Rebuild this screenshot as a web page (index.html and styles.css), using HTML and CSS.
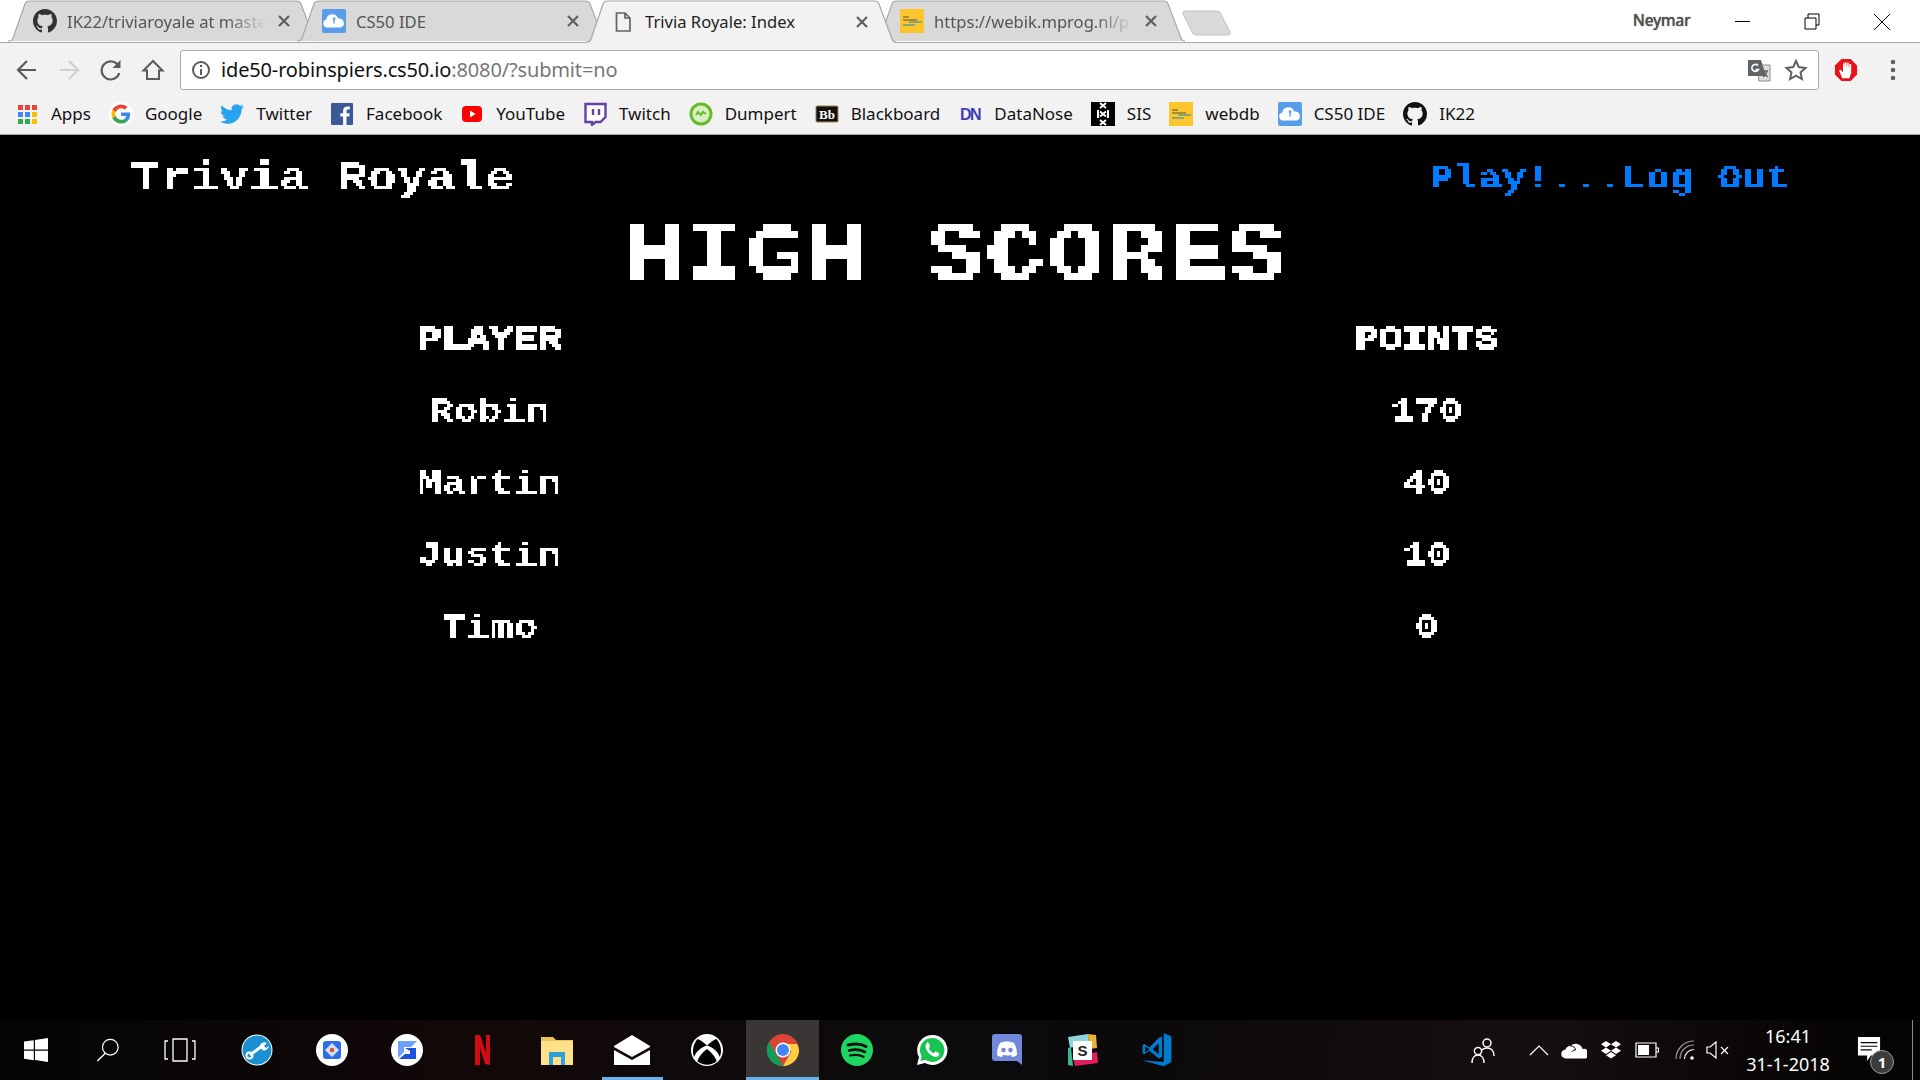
FILE: index.html
```html
<!DOCTYPE html>
<html lang="en">
<head>
<meta charset="utf-8">
<title>Trivia Royale: Index</title>
<link rel="stylesheet" href="styles.css">
</head>
<body>
<svg class="sprite" aria-hidden="true">
  <filter id="px3" x="-5%" y="-5%" width="110%" height="110%" color-interpolation-filters="sRGB"><feFlood x="1" y="1" width="1" height="1"/><feComposite width="3" height="3"/><feTile result="g"/><feComposite in="SourceGraphic" in2="g" operator="in"/><feComponentTransfer><feFuncA type="discrete" tableValues="0 1"/></feComponentTransfer><feMorphology operator="dilate" radius="1"/></filter>
  <filter id="px7" x="-5%" y="-5%" width="110%" height="110%" color-interpolation-filters="sRGB"><feFlood x="3" y="3" width="1" height="1"/><feComposite width="7" height="7"/><feTile result="g"/><feComposite in="SourceGraphic" in2="g" operator="in"/><feComponentTransfer><feFuncA type="discrete" tableValues="0 1"/></feComponentTransfer><feMorphology operator="dilate" radius="3"/></filter>
  <symbol id="gh" viewBox="0 0 16 16"><path fill="currentColor" d="M8 0C3.58 0 0 3.58 0 8c0 3.54 2.29 6.53 5.47 7.59.4.07.55-.17.55-.38 0-.19-.01-.82-.01-1.49-2.01.37-2.53-.49-2.69-.94-.09-.23-.48-.94-.82-1.13-.28-.15-.68-.52-.01-.53.63-.01 1.08.58 1.23.82.72 1.21 1.87.87 2.33.66.07-.52.28-.87.51-1.07-1.78-.2-3.64-.89-3.64-3.95 0-.87.31-1.59.82-2.15-.08-.2-.36-1.02.08-2.12 0 0 .67-.21 2.2.82.64-.18 1.32-.27 2-.27.68 0 1.36.09 2 .27 1.53-1.04 2.2-.82 2.2-.82.44 1.1.16 1.92.08 2.12.51.56.82 1.27.82 2.15 0 3.07-1.87 3.75-3.65 3.95.29.25.54.73.54 1.48 0 1.07-.01 1.93-.01 2.2 0 .21.15.46.55.38A8.013 8.013 0 0016 8c0-4.42-3.58-8-8-8z"/></symbol>
  <symbol id="cs50" viewBox="0 0 24 24"><rect width="24" height="24" rx="2" fill="#579dea"/><path fill="#fff" d="M5 18.500a4 4 0 0 1-.6-7.900 6 6 0 0 1 11.700-1 4.700 4.700 0 0 1 2.900 8.900z"/><path fill="#579dea" d="M10.800 8.500h2.600v1.800l-.6.600v3.600h-1.400v-3.600l-.6-.6z"/></symbol>
  <symbol id="webik" viewBox="0 0 24 24"><rect width="24" height="24" fill="#fdc52c"/><path stroke="#8a7a3a" stroke-width="1.400" d="M3 8h6M3 11h14"/><path stroke="#5f9f8f" stroke-width="1.400" d="M9 13h13M3 16h12"/></symbol>
  <symbol id="doc" viewBox="0 0 24 24"><path fill="none" stroke="#5f6368" stroke-width="1.700" d="M5.500 3h8.500l5 5v13h-13.500zM14 3v5h5"/></symbol>
  <symbol id="x" viewBox="0 0 16 16"><path stroke="#5f5f5f" stroke-width="2.200" d="M3 3l10 10M13 3L3 13"/></symbol>
</svg>

<header class="chrome">
  <div class="titlebar">
    <div class="tabs">
      <div class="tab">
        <svg class="tab-shape" viewBox="0 0 310 43" preserveAspectRatio="none"><path class="shape-off" d="M0 42h1q3 0 4-3L17 4q1-3 5-3h266q4 0 5 3l13 35q1 3 4 3"/></svg>
        <svg class="fav fav-gh"><use href="#gh"/></svg>
        <span class="tab-title tab-fade">IK22/triviaroyale at maste</span>
        <svg class="tab-x"><use href="#x"/></svg>
      </div>
      <div class="tab">
        <svg class="tab-shape" viewBox="0 0 310 43" preserveAspectRatio="none"><path class="shape-off" d="M0 42h1q3 0 4-3L17 4q1-3 5-3h266q4 0 5 3l13 35q1 3 4 3"/></svg>
        <svg class="fav"><use href="#cs50"/></svg>
        <span class="tab-title">CS50 IDE</span>
        <svg class="tab-x"><use href="#x"/></svg>
      </div>
      <div class="tab tab-active">
        <svg class="tab-shape" viewBox="0 0 310 43" preserveAspectRatio="none"><path class="shape-on" d="M0 43V42h1q3 0 4-3L17 4q1-3 5-3h266q4 0 5 3l13 35q1 3 4 3v1"/></svg>
        <svg class="fav"><use href="#doc"/></svg>
        <span class="tab-title tab-title-on">Trivia Royale: Index</span>
        <svg class="tab-x"><use href="#x"/></svg>
      </div>
      <div class="tab">
        <svg class="tab-shape" viewBox="0 0 310 43" preserveAspectRatio="none"><path class="shape-off" d="M0 42h1q3 0 4-3L17 4q1-3 5-3h266q4 0 5 3l13 35q1 3 4 3"/></svg>
        <svg class="fav"><use href="#webik"/></svg>
        <span class="tab-title tab-fade">https://webik.mprog.nl/p</span>
        <svg class="tab-x"><use href="#x"/></svg>
      </div>
      <svg class="newtab" viewBox="0 0 50 26"><path d="M3 1h32q3 0 4 3l9 18q1 3-2 3H14q-3 0-4-3L1 4Q0 1 3 1z"/></svg>
    </div>
    <span class="profile">Neymar</span>
    <div class="winctl">
      <svg class="wbtn" viewBox="0 0 70 42"><path d="M28 21.500h15" stroke="#000" stroke-width="1" fill="none"/></svg>
      <svg class="wbtn" viewBox="0 0 70 42"><path d="M28 18h11v11H28zM31 18v-4h11v11h-3" stroke="#000" stroke-width="1" fill="none"/></svg>
      <svg class="wbtn" viewBox="0 0 70 42"><path d="M27 14l16 16M43 14L27 30" stroke="#000" stroke-width="1" fill="none"/></svg>
    </div>
  </div>

  <div class="toolbar">
    <svg class="nav-btn" viewBox="0 0 42 42"><path d="M30 21H13M21 12l-9 9 9 9" fill="none" stroke="#5a5a5a" stroke-width="2.200"/></svg>
    <svg class="nav-btn" viewBox="0 0 42 42"><path d="M12 21h17M21 12l9 9-9 9" fill="none" stroke="#d0d0d0" stroke-width="2.200"/></svg>
    <svg class="nav-btn" viewBox="0 0 42 42"><path d="M28.500 17a9 9 0 1 0 .8 7" fill="none" stroke="#5a5a5a" stroke-width="2.200"/><path d="M30.500 11v8h-8z" fill="#5a5a5a"/></svg>
    <svg class="nav-btn" viewBox="0 0 42 42"><path d="M21 12l-9.500 9.500H15V30h12v-8.500h3.500z" fill="none" stroke="#5a5a5a" stroke-width="2"/></svg>
    <div class="omnibox">
      <svg class="info" viewBox="0 0 20 20"><circle cx="10" cy="10" r="8" fill="none" stroke="#5a5a5a" stroke-width="2"/><path d="M10 9v6M10 5v2" stroke="#5a5a5a" stroke-width="2"/></svg>
      <span class="url">ide50-robinspiers.cs50.io<span class="url-dim">:8080/?submit=no</span></span>
      <svg class="omni-ic" viewBox="0 0 24 24"><path fill="#ddd" stroke="#8a8a8a" d="M10 7h13v16H12z"/><path fill="#5f6368" d="M1 2h13l5 16H1z"/><path fill="none" stroke="#fff" stroke-width="1.600" d="M11 7.500a3.500 3.500 0 1 0 .5 4H8.500"/><path fill="none" stroke="#5f6368" stroke-width="1.300" d="M14 13h7M17 13c.5 3 2 5 4 6M20 13c-.5 3-2 5-4 6"/></svg>
      <svg class="omni-ic star" viewBox="0 0 24 24"><path fill="none" stroke="#5f6368" stroke-width="2" d="M12 3l2.800 6.100 6.700.8-5 4.500 1.400 6.600-5.900-3.300L6.100 21l1.400-6.600-5-4.500 6.700-.8z"/></svg>
    </div>
    <svg class="adblock" viewBox="0 0 26 26"><path fill="#e6131a" d="M8 1h10l7 7v10l-7 7H8l-7-7V8z"/><path fill="#fff" d="M9 22l-3.500-8.500 1.200-1 3 3V6h1.400v5l.5-6.500h1.800L13.900 11l.5-6H16v6.500l1-5h1.600V16l-2 6z"/></svg>
    <svg class="dots" viewBox="0 0 6 22"><circle cx="3" cy="3" r="2.300" fill="#5f5f5f"/><circle cx="3" cy="11" r="2.300" fill="#5f5f5f"/><circle cx="3" cy="19" r="2.300" fill="#5f5f5f"/></svg>
  </div>

  <div class="bookmarks">
    <a class="bm"><svg class="bm-ic" viewBox="0 0 24 24"><path fill="#ea4335" d="M3 3h5v5H3zM10 3h5v5h-5zM17 3h5v5h-5z"/><path fill="#4285f4" d="M3 10h5v5H3zM10 10h5v5h-5z"/><path fill="#34a853" d="M3 17h5v5H3zM10 17h5v5h-5z"/><path fill="#fbbc05" d="M17 10h5v5h-5zM17 17h5v5h-5z"/></svg>Apps</a>
    <a class="bm"><svg class="bm-ic" viewBox="-6 -6 60 60"><circle cx="24" cy="24" r="30" fill="#fff"/><path fill="#EA4335" d="M24 9.500c3.540 0 6.710 1.220 9.210 3.600l6.850-6.850C35.900 2.380 30.470 0 24 0 14.620 0 6.510 5.380 2.560 13.220l7.980 6.190C12.430 13.720 17.740 9.500 24 9.500z"/><path fill="#4285F4" d="M46.980 24.550c0-1.570-.15-3.090-.38-4.550H24v9.020h12.940c-.58 2.960-2.260 5.480-4.780 7.180l7.730 6c4.510-4.180 7.090-10.360 7.090-17.650z"/><path fill="#FBBC05" d="M10.530 28.590c-.48-1.450-.76-2.990-.76-4.590s.27-3.140.76-4.590l-7.980-6.190C.92 16.460 0 20.120 0 24c0 3.880.92 7.540 2.560 10.780l7.970-6.190z"/><path fill="#34A853" d="M24 48c6.480 0 11.930-2.130 15.890-5.810l-7.730-6c-2.150 1.450-4.920 2.300-8.160 2.300-6.260 0-11.570-4.220-13.470-9.910l-7.980 6.190C6.510 42.620 14.620 48 24 48z"/></svg>Google</a>
    <a class="bm"><svg class="bm-ic" viewBox="0 0 24 24"><path fill="#2aa3ef" d="M23.953 4.570a10 10 0 01-2.825.775 4.958 4.958 0 002.163-2.723c-.951.555-2.005.959-3.127 1.184a4.920 4.920 0 00-8.384 4.482C7.690 8.095 4.067 6.130 1.640 3.162a4.822 4.822 0 00-.666 2.475c0 1.710.870 3.213 2.188 4.096a4.904 4.904 0 01-2.228-.616v.06a4.923 4.923 0 003.946 4.827 4.996 4.996 0 01-2.212.085 4.936 4.936 0 004.604 3.417 9.867 9.867 0 01-6.102 2.105c-.39 0-.779-.023-1.170-.067a13.995 13.995 0 007.557 2.209c9.053 0 13.998-7.496 13.998-13.985 0-.21 0-.42-.015-.63A9.935 9.935 0 0024 4.590z"/></svg>Twitter</a>
    <a class="bm"><svg class="bm-ic" viewBox="0 0 24 24"><rect x="1" y="1" width="22" height="22" rx="1" fill="#3b5998"/><path fill="#fff" d="M16.500 23v-8.500h2.800l.4-3.300h-3.200V9.100c0-1 .3-1.600 1.600-1.600h1.700V4.600c-.3 0-1.300-.1-2.500-.1-2.500 0-4.200 1.500-4.200 4.300v2.400h-2.800v3.300h2.800V23z"/></svg>Facebook</a>
    <a class="bm"><svg class="bm-ic" viewBox="0 0 24 24"><rect x="2" y="4" width="20" height="16" rx="4" fill="#f00"/><path fill="#fff" d="M10 8.500l5.500 3.500-5.500 3.500z"/></svg>YouTube</a>
    <a class="bm"><svg class="bm-ic" viewBox="0 0 24 24"><path fill="#fff" stroke="#6441a4" stroke-width="2.400" d="M2.500 2h20v13l-5 5h-5l-3.500 3v-3H2.500z"/><path stroke="#6441a4" stroke-width="2.400" d="M10 7v6M16 7v6"/></svg>Twitch</a>
    <a class="bm"><svg class="bm-ic" viewBox="0 0 24 24"><circle cx="12" cy="12" r="10" fill="#d9efc6" stroke="#66bb2a" stroke-width="3"/><path stroke="#66bb2a" stroke-width="2" fill="none" d="M7 13l2-3 3 3 2-3 3 2"/></svg>Dumpert</a>
    <a class="bm"><svg class="bm-ic" viewBox="0 0 24 24"><rect x="1" y="4" width="22" height="16" rx="1" fill="#111" stroke="#a8874a"/><text class="bb" x="12" y="16.500" text-anchor="middle">Bb</text></svg>Blackboard</a>
    <a class="bm"><svg class="bm-ic" viewBox="0 0 24 24"><text class="dn" x="12" y="18" text-anchor="middle">DN</text></svg>DataNose</a>
    <a class="bm"><svg class="bm-ic" viewBox="0 0 24 24"><rect width="24" height="29" y="-2" fill="#000"/><path stroke="#fff" stroke-width="2" d="M9 1l6 5M15 1L9 6M9 9.500l6 5M15 9.500l-6 5M9 18l6 5M15 18l-6 5M7 8v8M17 8v8"/></svg>SIS</a>
    <a class="bm"><svg class="bm-ic"><use href="#webik"/></svg>webdb</a>
    <a class="bm"><svg class="bm-ic"><use href="#cs50"/></svg>CS50 IDE</a>
    <a class="bm"><svg class="bm-ic bm-gh"><use href="#gh"/></svg>IK22</a>
  </div>
</header>

<main class="page">
  <div class="site-head">
    <span class="brand"><span class="px px-left">Trivia Royale</span></span>
    <span class="site-nav"><span class="px px-right">Play!...Log Out</span></span>
  </div>
  <h1 class="hs-title"><span class="px">HIGH SCORES</span></h1>
  <div class="scores">
    <div class="cell cell-head"><span class="px">PLAYER</span></div><div class="cell cell-head"><span class="px">POINTS</span></div>
    <div class="cell"><span class="px">Robin</span></div><div class="cell"><span class="px">170</span></div>
    <div class="cell"><span class="px">Martin</span></div><div class="cell"><span class="px">40</span></div>
    <div class="cell"><span class="px">Justin</span></div><div class="cell"><span class="px">10</span></div>
    <div class="cell"><span class="px">Timo</span></div><div class="cell"><span class="px">0</span></div>
  </div>
</main>

<footer class="taskbar">
  <div class="sys">
    <svg class="tb" viewBox="0 0 24 24"><path fill="#fff" d="M0 3.500l9.800-1.300v9.400H0zM11 2l13-2v11.600H11zM0 12.700h9.800v9.500L0 20.800zM11 12.700h13V24l-13-1.900z"/></svg>
    <svg class="tb" viewBox="0 0 26 26"><circle cx="15.500" cy="10" r="8.500" fill="none" stroke="#fff" stroke-width="1.300"/><path d="M10 16.500L1.500 25" stroke="#fff" stroke-width="1.500"/></svg>
    <svg class="tb tb-wide" viewBox="0 0 32 24"><path fill="none" stroke="#fff" stroke-width="1.300" d="M9 1h14v22H9zM4 3H1v18h3M28 3h3v18h-3"/></svg>
  </div>
  <div class="apps">
    <span class="app"><svg viewBox="0 0 32 32"><circle cx="16" cy="16" r="15.500" fill="#fff"/><circle cx="16" cy="16" r="14.500" fill="#1a8fd1"/><path fill="none" stroke="#fff" stroke-width="3" d="M9 21l12-9"/><circle cx="8.500" cy="21.500" r="3" fill="none" stroke="#fff" stroke-width="2"/><path fill="#fff" d="M19 11a5 5 0 0 1 7-2l-3 3 2 2 3-2a5 5 0 0 1-7 4z"/></svg></span>
    <span class="app"><svg viewBox="0 0 32 32"><circle cx="16" cy="16" r="16" fill="#fff"/><rect x="7" y="7" width="18" height="18" rx="3" fill="#2e6de4"/><path fill="#cfe0ff" d="M16 9l7 7-7 7-7-7z"/><circle cx="16" cy="16" r="2.300" fill="#e8501f"/></svg></span>
    <span class="app"><svg viewBox="0 0 32 32"><circle cx="16" cy="16" r="16" fill="#fff"/><path fill="#6ea0ff" d="M7 7h19l-6 6h-7v5l-6 6z"/><path fill="#1b54dc" d="M14 14h11v11H8l6-5h5v-3z"/></svg></span>
    <span class="app"><svg viewBox="0 0 32 32"><path fill="#d00d12" d="M9 1h5l6 18V1h4v30l-5-1-5-16v17l-5 .500z"/></svg></span>
    <span class="app"><svg viewBox="0 0 32 32"><path fill="#e9c24f" d="M0 3h12l3 3h17v25H0z"/><rect y="7" width="32" height="24" rx="1" fill="#ffe18a"/><path fill="#2f9fe0" d="M8 18h16v13h-4v-8h-8v8H8z"/></svg></span>
    <span class="app app-mail"><svg viewBox="0 0 36 32"><path fill="#fff" d="M18 1l18 11v1L18 23 0 13v-1zM0 16l18 10 18-10v15H0z"/></svg></span>
    <span class="app"><svg viewBox="0 0 32 32"><circle cx="16" cy="16" r="16" fill="#fff"/><path fill="#000" d="M16 11.500C13 9 9.500 5.800 6.500 5 1.500 11 1 18 3.200 23c1.500-5 7-10 12.800-11.500zM16 11.500C19 9 22.500 5.800 25.500 5c5 6 5.500 13 3.300 18-1.500-5-7-10-12.800-11.500zM16 15c-4 3-8.500 8-9.700 12.300 5.500 4.500 14 4.500 19.400 0C24.500 23 20 18 16 15z"/></svg></span>
    <span class="app app-active"><svg viewBox="0 0 32 32"><circle cx="16" cy="16" r="16" fill="#db4437"/><path fill="#0f9d58" d="M16 32A16 16 0 0 1 2 8l8.500 14.500L16 32z"/><path fill="#ffcd40" d="M32 16a16 16 0 0 1-16 16l8.500-14.500L16 10h14a16 16 0 0 1 2 6z"/><circle cx="16" cy="16" r="7.500" fill="#fff"/><circle cx="16" cy="16" r="6" fill="#4285f4"/></svg></span>
    <span class="app"><svg viewBox="0 0 32 32"><circle cx="16" cy="16" r="16" fill="#1ed760"/><path fill="none" stroke="#111" stroke-linecap="round" stroke-width="3" d="M7 11c6-1.500 13-1.500 18 1.500"/><path fill="none" stroke="#111" stroke-linecap="round" stroke-width="2.600" d="M8 16.500c5-1.300 11-1 16 1.500"/><path fill="none" stroke="#111" stroke-linecap="round" stroke-width="2.200" d="M9 21.500c4.500-1 9.500-.8 13.500 1.300"/></svg></span>
    <span class="app"><svg viewBox="0 0 32 32"><path fill="#fff" d="M16 1a15 15 0 0 0-13 22.300L1 31l8-2A15 15 0 1 0 16 1z"/><path fill="#19c34f" d="M16 4A12 12 0 0 0 5.700 22.200L4.500 27l5-1.200A12 12 0 1 0 16 4z"/><path fill="#fff" d="M11.500 8.500c-1.500 1-2.500 3-1.700 5.500 1 3.500 4.500 7.500 8.500 8.700 2.500.7 4.500-.5 5-2.200.2-.7 0-1.200-.4-1.400l-3-1.500c-.5-.2-.8 0-1 .3l-1 1.300c-2.500-1-4.200-3-5.200-5l1.100-1.300c.3-.4.300-.7.100-1.100l-1.300-3c-.2-.5-.9-.9-1.600-.8z"/></svg></span>
    <span class="app"><svg viewBox="0 0 32 32"><path fill="#7289da" d="M4 0h24q3 0 3 3v28l-5-4H4q-3 0-3-3V3q0-3 3-3z"/><path fill="#fff" d="M9 9c4-2 10-2 14 0 2 3 3 7 3 12-2 1.500-3.500 2-5 2l-1-2c-2 .6-4 .6-8 0l-1 2c-1.500 0-3-.5-5-2 0-5 1-9 3-12z"/><circle cx="12.500" cy="16" r="2.300" fill="#7289da"/><circle cx="19.500" cy="16" r="2.300" fill="#7289da"/></svg></span>
    <span class="app"><svg viewBox="0 0 32 32"><path fill="#8fd4e0" d="M2 3l20-3 1 9L4 14z"/><path fill="#e9b33a" d="M22 0l8 1 1 13-8 1z"/><path fill="#3eb890" d="M2 14l3-1 2 19-5-1z"/><path fill="#e01e5a" d="M7 23l24-5 1 11-23 3z"/><rect x="7" y="7" width="19" height="19" rx="1" fill="#fff"/><text class="slack" x="16.500" y="22" text-anchor="middle">S</text></svg></span>
    <span class="app"><svg viewBox="0 0 36 40"><path fill="#007acc" d="M26 0l9 4v30l-9 5-26-7 26 2V0z"/><path fill="#007acc" d="M20 6l4-2v24l-4 2-11-9-6 4-2-1V14l2-1 6 4zM9 19l-5-3v7zM20 12l-7 7 7 6z"/></svg></span>
  </div>
  <div class="tray">
    <svg class="tr tr-people" viewBox="0 0 24 28"><circle cx="16" cy="7" r="4" fill="none" stroke="#fff" stroke-width="1.500"/><path d="M9 20c0-5 3-8 7-8s7 3 7 8" fill="none" stroke="#fff" stroke-width="1.500"/><circle cx="7" cy="15" r="3.600" fill="#050303" stroke="#fff" stroke-width="1.500"/><path d="M1 27c0-5 2.500-8 6-8s6 3 6 8" fill="none" stroke="#fff" stroke-width="1.500"/></svg>
    <svg class="tr tr-caret" viewBox="0 0 20 12"><path d="M1 11l9-9 9 9" fill="none" stroke="#fff" stroke-width="1.200"/></svg>
    <svg class="tr tr-cloud" viewBox="0 0 26 18"><path fill="#fff" d="M5 17.500a4.500 4.500 0 0 1-.5-9 5 5 0 0 1 5-3.500 7 7 0 0 1 12 3 5 5 0 0 1 3 9.500z"/><path fill="none" stroke="#0a0606" stroke-width="1" d="M9.500 5a5 5 0 0 1 5 4 4 4 0 0 0-4 2"/></svg>
    <svg class="tr tr-drop" viewBox="0 0 22 20"><path fill="#fff" d="M6 1l5 3.200L6 7.500 1 4.200zM16 1l5 3.200-5 3.300-5-3.300zM6 7.500l5 3.300-5 3.200-5-3.200zM16 7.500l5 3.300-5 3.200-5-3.200zM11 12l5 3.200-5 3.300-5-3.300z"/></svg>
    <svg class="tr tr-batt" viewBox="0 0 24 16"><path fill="none" stroke="#fff" stroke-width="1.200" d="M1 1h20v14H1zM21.500 6h2v4h-2"/><rect x="3" y="3" width="11" height="10" fill="#fff"/></svg>
    <svg class="tr tr-wifi" viewBox="0 0 20 20"><path fill="none" stroke="#999" stroke-width="1.200" d="M1 19C1 9 9 1 19 1M5 19C5 11 11 5 19 5"/><path fill="none" stroke="#fff" stroke-width="1.200" d="M9.500 19c0-5 4-9.500 9.500-9.500"/><circle cx="17" cy="18" r="1.800" fill="#fff"/></svg>
    <svg class="tr tr-vol" viewBox="0 0 24 18"><path fill="none" stroke="#fff" stroke-width="1.200" d="M1 6h3l6-5v16l-6-5H1zM15 6l7 7M22 6l-7 7"/></svg>
    <div class="clock"><span>16:41</span><span>31-1-2018</span></div>
    <div class="notif">
      <svg class="notif-ic" viewBox="0 0 26 28"><path fill="#fff" d="M1 1h24v20H15l-4 6v-6H1z"/><path stroke="#050303" stroke-width="1.300" d="M4 7h18M4 11h18M4 15h12"/></svg>
      <span class="badge">1</span>
    </div>
    <span class="show-desk"></span>
  </div>
</footer>
</body>
</html>
```

FILE: styles.css
```css
* { box-sizing: border-box; }
html, body { height: 100%; }
body {
  margin: 0;
  height: 1080px;
  width: 1920px;
  overflow: hidden;
  display: flex;
  flex-direction: column;
  background: #000;
  font-family: "Noto Sans", "Open Sans", sans-serif;
}
.sprite { position: absolute; width: 0; height: 0; }

/* Browser chrome */
.chrome { flex: none; background: #f2f2f2; }
.titlebar {
  height: 42px;
  background: #fff;
  display: flex;
  position: relative;
  z-index: 1;
}
.tabs { display: flex; padding-left: 8px; flex: 1; }
.tab {
  position: relative;
  flex: none;
  width: 310px;
  height: 42px;
  margin-right: -21px;
  padding: 0 26px 0 25px;
  display: flex;
  align-items: center;
  gap: 10px;
}
.tab-active { height: 43px; z-index: 2; }
.tab-shape { position: absolute; inset: 0; width: 100%; height: 100%; }
.shape-off { fill: #d9d9d9; stroke: #a6a6a6; stroke-width: 1.2; }
.shape-on { fill: #f2f2f2; stroke: #a6a6a6; stroke-width: 1.2; }
.fav { position: relative; flex: none; width: 24px; height: 24px; }
.fav-gh { color: #333; }
.tab-title {
  position: relative;
  flex: 1;
  min-width: 0;
  white-space: nowrap;
  font-size: 16.6px;
  color: #555;
}
.tab-fade {
  -webkit-mask-image: linear-gradient(90deg, #000 80%, transparent 100%);
  mask-image: linear-gradient(90deg, #000 80%, transparent 100%);
}
.tab-title-on { color: #222; }
.tab-x { position: relative; flex: none; width: 16px; height: 16px; }
.newtab { flex: none; width: 50px; height: 26px; margin: 10px 0 0 18px; }
.newtab path { fill: #d9d9d9; stroke: #c4c4c4; }
.profile {
  position: absolute;
  left: 1633px;
  top: 9px;
  font-size: 15.5px;
  color: #555;
  text-shadow: 0 0 1px #000, 0 0 2px #fff;
}
.winctl { display: flex; position: absolute; right: 3px; top: 0; }
.wbtn { width: 70px; height: 42px; }

.toolbar {
  height: 51px;
  padding: 7px 0 4px 6px;
  border-top: 1px solid #a9a9a9;
  display: flex;
  align-items: center;
}
.nav-btn { flex: none; width: 42px; height: 42px; }
.omnibox {
  flex: 1;
  height: 40px;
  margin-left: 6px;
  margin-right: 15px;
  background: #fff;
  border: 1px solid #ababab;
  border-radius: 3px;
  display: flex;
  align-items: center;
  padding: 0 10px;
}
.info { flex: none; width: 20px; height: 20px; }
.url {
  flex: 1;
  margin-left: 10px;
  font-size: 20px;
  color: #111;
  letter-spacing: -.15px;
}
.url-dim { color: #777; }
.omni-ic { flex: none; width: 24px; height: 24px; }
.star { margin-left: 13px; }
.adblock { flex: none; width: 24px; height: 26px; margin-right: 32px; }
.dots { flex: none; width: 6px; height: 22px; margin-right: 24px; }

.bookmarks {
  height: 42px;
  padding: 0 0 0 15px;
  border-bottom: 1px solid #a9a9a9;
  display: flex;
  align-items: center;
  gap: 18px;
}
.bm {
  display: flex;
  align-items: center;
  gap: 12px;
  font-size: 17px;
  color: #111;
  white-space: nowrap;
}
.bm-ic { flex: none; width: 24px; height: 24px; }
.bm-gh { color: #111; }
.bb { font: bold 13px "Liberation Serif", serif; fill: #fff; }
.dn { font: bold 16px "Liberation Sans", sans-serif; fill: #3f3fb5; letter-spacing: -1.5px; }
.slack { font: bold 15px "Liberation Sans", sans-serif; fill: #222; }

/* Page */
.page {
  flex: 1;
  min-height: 0;
  background: #000;
  color: #fff;
  font-family: "Liberation Mono", monospace;
  font-weight: 700;
}
.px { display: inline-block; transform: scaleX(1.212); transform-origin: center; white-space: pre; }
.px-left { transform-origin: left; transform: scaleX(1.2); }
.px-right { transform-origin: right; }
.site-head {
  display: flex;
  justify-content: space-between;
  align-items: flex-start;
  padding: 24px 130px 0 131px;
  height: 54px;
  line-height: 40px;
}
.brand { font-size: 41px; filter: url(#px3); }
.site-nav { margin-top: 1px; font-size: 33px; color: #007bff; filter: url(#px3); }
.hs-title {
  margin: 28px 0 0;
  text-align: center;
  font-size: 80px;
  line-height: 80px;
  height: 80px;
  padding-right: 8px;
  filter: url(#px7);
}
.hs-title .px { transform: scaleX(1.25); }
.scores {
  display: grid;
  grid-template-columns: 937px 937px;
  grid-auto-rows: 72px;
  padding-left: 21px;
  margin-top: 8px;
  filter: url(#px3);
}
.cell {
  text-align: center;
  font-size: 33px;
  line-height: 72px;
}
.cell-head { -webkit-text-stroke: 1px #fff; }

/* Taskbar */
.taskbar {
  flex: none;
  height: 60px;
  display: flex;
  background:
    linear-gradient(100deg, transparent 60%, rgba(70,55,50,.18) 80%, transparent 95%),
    linear-gradient(90deg, #040405, #120808 25%, #0b0a0c 50%, #0c0708 75%, #050303);
}
.sys { display: flex; width: 219px; flex: none; }
.tb { flex: none; width: 24px; height: 30px; margin: 15px 24px; }
.tb-wide { width: 32px; margin: 15px 20px; }
.apps { display: flex; flex: none; }
.app {
  position: relative;
  width: 75px;
  height: 60px;
  flex: none;
  display: flex;
  align-items: center;
  justify-content: center;
}
.app svg { width: 32px; height: 34px; }
.app-mail svg { width: 36px; }
.app-mail::after {
  content: "";
  position: absolute;
  left: 8px;
  right: 6px;
  bottom: 0;
  height: 3px;
  background: #6cb2ea;
}
.app-active {
  background: linear-gradient(#6cb2ea, #6cb2ea) bottom / 100% 3px no-repeat, #3a3636;
  border-left: 2px solid transparent;
  background-clip: padding-box;
}
.tray {
  flex: 1;
  position: relative;
  display: flex;
  align-items: center;
  color: #fff;
  padding-left: 277px;
}
.tr { flex: none; }
.tr-people { width: 24px; height: 28px; }
.tr-caret { width: 20px; height: 12px; margin-left: 34px; }
.tr-cloud { width: 26px; height: 18px; margin-left: 12px; }
.tr-drop { width: 22px; height: 20px; margin-left: 13px; }
.tr-batt { width: 24px; height: 16px; margin-left: 13px; }
.tr-wifi { width: 20px; height: 20px; margin-left: 16px; }
.tr-vol { width: 24px; height: 18px; margin-left: 11px; }
.clock {
  width: 86px;
  margin-left: 15px;
  display: flex;
  flex-direction: column;
  align-items: center;
  gap: 5px;
  font-size: 18px;
  line-height: 23px;
}
.notif { position: relative; width: 44px; height: 44px; margin-left: 18px; }
.notif-ic { position: absolute; left: 8px; top: 7px; width: 24px; height: 28px; }
.badge {
  position: absolute;
  left: 21px;
  top: 22px;
  width: 24px;
  height: 24px;
  border-radius: 50%;
  background: #3c3c3c;
  border: 1px solid #999;
  font-size: 15px;
  font-weight: 700;
  line-height: 22px;
  text-align: center;
}
.show-desk { position: absolute; right: 7px; top: 0; bottom: 0; width: 1px; background: #8a8a8a; }
```
